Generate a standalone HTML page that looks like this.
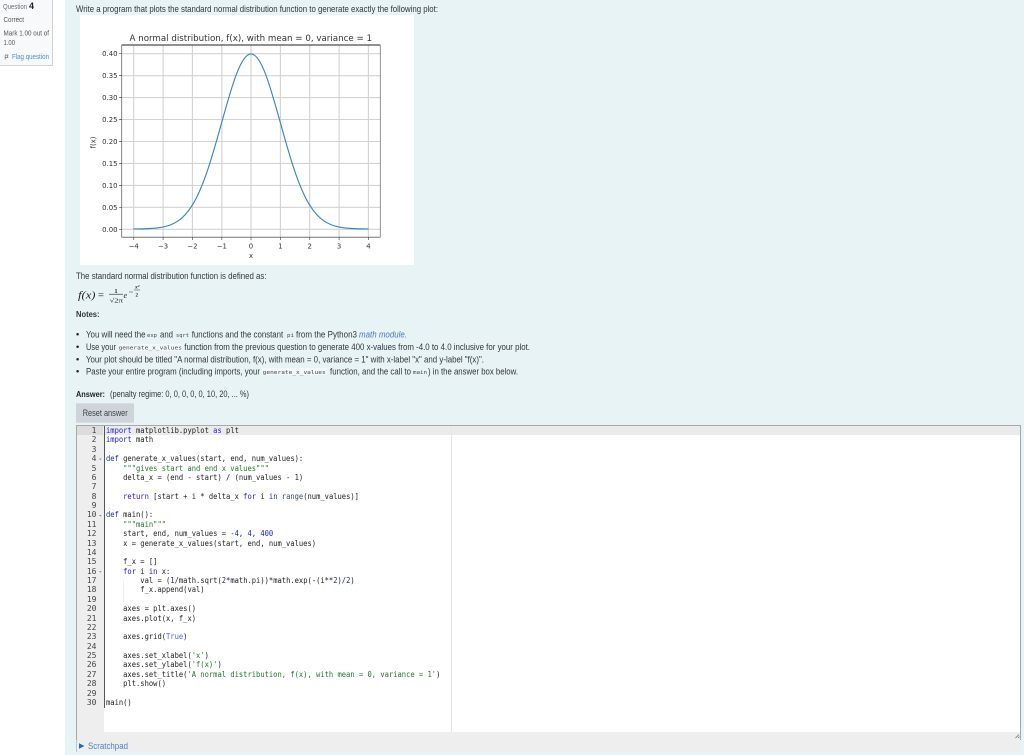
<!DOCTYPE html>
<html lang="en"><head><meta charset="utf-8"><title>Question 4</title>
<style>
html,body{margin:0;padding:0;background:#fff;width:1024px;height:755px;overflow:hidden}
#page{position:relative;width:1024px;height:755px;overflow:hidden;filter:blur(.35px)}
#page div,#page pre,#page svg{position:absolute}
#content{left:65px;top:0;width:959px;height:755px;background:#e7f3f5}
#panel{left:0;top:-1px;width:52px;height:65px;background:#f8f9fa;border:1px solid #d0d3d6;border-left:0}
#plot{left:80px;top:15px;width:333.5px;height:250px;background:#fff}
#editor{left:76px;top:425px;width:943px;height:314px;background:#fff;border:1.5px solid #a8a8a8;overflow:hidden}
#gutter{left:0;top:0;width:26.5px;height:100%;background:#eee}
#bottom{left:0;top:306px;width:100%;height:8px;background:#eee}
#activeline{left:26.5px;top:0;width:100%;height:9.4px;background:#ebebeb}
#activegut{left:0;top:0;width:26px;height:9.4px;background:#dcdcdc}
#gline{left:26.5px;top:0;width:1.2px;height:282px;background:#555}
#margin{left:373.5px;top:0;width:1px;height:306px;background:#e6e6e6}
#scratch{left:76px;top:740px;width:945px;height:12px;background:#eee;border-left:1.5px solid #c4c4c4;box-sizing:border-box}
#nums,#code{margin:0;top:426px;font:8px/9.38px "DejaVu Sans Mono","Liberation Mono",monospace;color:#333}
#nums{left:74px;width:22.5px;text-align:right;color:#444}
#code{left:106.3px;color:#222;transform:scaleX(.89);transform-origin:0 0}
.k{color:#1c1cd8}.s{color:#1f7a28}.n{color:#1a1acd}.f{color:#3c4c72}.c{color:#585cf6}
text{font-family:"Liberation Sans",sans-serif;fill:#33363a}
.d{font-family:"DejaVu Sans",sans-serif;fill:#333}
.m{font-family:"DejaVu Sans Mono",monospace;font-size:5.6px;fill:#444}
.q{font-family:"Liberation Serif",serif;fill:#222}
</style></head><body>
<div id="page">
<div id="content"></div>
<div id="panel"></div>
<div id="plot"></div>
<div id="editor">
  <div id="gutter"></div><div id="bottom"></div><div id="activeline"></div><div id="activegut"></div><div id="margin"></div><div id="gline"></div>
</div>
<div id="scratch"></div>
<svg width="1024" height="755" viewBox="0 0 1024 755" style="left:0;top:0">
<!-- side panel -->
<text x="3" y="9" font-size="7" textLength="24" lengthAdjust="spacingAndGlyphs" style="fill:#6a7076">Question</text>
<text x="29" y="9" font-size="9" font-weight="bold" style="fill:#222">4</text>
<text x="3.5" y="22" font-size="7" textLength="20.5" lengthAdjust="spacingAndGlyphs" style="fill:#555">Correct</text>
<text x="3.5" y="35.5" font-size="7" textLength="45.5" lengthAdjust="spacingAndGlyphs" style="fill:#555">Mark 1.00 out of</text>
<text x="3.5" y="45" font-size="7" textLength="11.5" lengthAdjust="spacingAndGlyphs" style="fill:#555">1.00</text>
<path d="M5 55h3l-.6 1.2.6 1.2H5.5M5.2 55v4.5" fill="none" stroke="#777" stroke-width=".7"/>
<text x="12" y="59" font-size="7" textLength="37" lengthAdjust="spacingAndGlyphs" style="fill:#4a8fd0">Flag question</text>
<!-- heading -->
<text x="76" y="12" font-size="8.9" textLength="362" lengthAdjust="spacingAndGlyphs">Write a program that plots the standard normal distribution function to generate exactly the following plot:</text>
<!-- chart grid -->
<g stroke="#d2d2d2" stroke-width="1.1" fill="none">
<path d="M133.7 45V237.3M163.1 45V237.3M192.4 45V237.3M221.8 45V237.3M251 45V237.3M280.4 45V237.3M309.7 45V237.3M339.1 45V237.3M368.4 45V237.3"/>
<path d="M121.7 53.7H380.3M121.7 75.65H380.3M121.7 97.6H380.3M121.7 119.5H380.3M121.7 141.5H380.3M121.7 163.4H380.3M121.7 185.4H380.3M121.7 207.3H380.3M121.7 229.3H380.3"/>
</g>
<g fill="none" stroke="#3b86bf" stroke-width="1.15">
<path id="curve" d="M251 53.96C255.9 53.96 260.8 61.66 265.7 74.53C270.6 87.4 275.5 105.15 280.4 122.84C285.3 140.53 290.2 157.96 295.1 172.17C300 186.38 304.9 197.41 309.8 205.31C314.7 213.21 319.6 218.11 324.5 221.31C329.4 224.51 334.3 226.09 339.2 227.06C344.1 228.03 349 228.4 353.9 228.62C358.8 228.84 363.7 228.9 368.6 228.94"/>
<path transform="translate(502,0) scale(-1,1)" d="M251 53.96C255.9 53.96 260.8 61.66 265.7 74.53C270.6 87.4 275.5 105.15 280.4 122.84C285.3 140.53 290.2 157.96 295.1 172.17C300 186.38 304.9 197.41 309.8 205.31C314.7 213.21 319.6 218.11 324.5 221.31C329.4 224.51 334.3 226.09 339.2 227.06C344.1 228.03 349 228.4 353.9 228.62C358.8 228.84 363.7 228.9 368.6 228.94"/>
</g>
<path d="M121.7 45H380.3" stroke="#222" stroke-width=".9"/>
<path d="M121.7 45V237.3" stroke="#666" stroke-width=".8"/>
<path d="M380.3 45V237.3" stroke="#777" stroke-width=".8"/>
<path d="M121.7 237.3H380.3" stroke="#777" stroke-width="1"/>
<g stroke="#444" stroke-width=".7">
<path d="M133.7 237.3v2.6M163.1 237.3v2.6M192.4 237.3v2.6M221.8 237.3v2.6M251 237.3v2.6M280.4 237.3v2.6M309.7 237.3v2.6M339.1 237.3v2.6M368.4 237.3v2.6"/>
<path d="M121.7 53.7h-2.6M121.7 75.65h-2.6M121.7 97.6h-2.6M121.7 119.5h-2.6M121.7 141.5h-2.6M121.7 163.4h-2.6M121.7 185.4h-2.6M121.7 207.3h-2.6M121.7 229.3h-2.6"/>
</g>
<text class="d" x="129.5" y="41" font-size="8.6" textLength="242.5" lengthAdjust="spacingAndGlyphs">A normal distribution, f(x), with mean = 0, variance = 1</text>
<g font-size="6.9" text-anchor="end">
<text class="d" x="117.5" y="56.2">0.40</text><text class="d" x="117.5" y="78.1">0.35</text><text class="d" x="117.5" y="100.1">0.30</text><text class="d" x="117.5" y="122">0.25</text><text class="d" x="117.5" y="144">0.20</text><text class="d" x="117.5" y="165.9">0.15</text><text class="d" x="117.5" y="187.9">0.10</text><text class="d" x="117.5" y="209.8">0.05</text><text class="d" x="117.5" y="231.8">0.00</text>
</g>
<g font-size="6.9" text-anchor="middle">
<text class="d" x="133.7" y="248.5">−4</text><text class="d" x="163.1" y="248.5">−3</text><text class="d" x="192.4" y="248.5">−2</text><text class="d" x="221.8" y="248.5">−1</text><text class="d" x="251" y="248.5">0</text><text class="d" x="280.4" y="248.5">1</text><text class="d" x="309.7" y="248.5">2</text><text class="d" x="339.1" y="248.5">3</text><text class="d" x="368.4" y="248.5">4</text>
<text class="d" x="251" y="258">x</text>
<text class="d" transform="translate(95.5,142.5) rotate(-90)">f(x)</text>
</g>
<!-- prose -->
<text x="76" y="279" font-size="8.9" textLength="190.5" lengthAdjust="spacingAndGlyphs">The standard normal distribution function is defined as:</text>
<!-- formula -->
<text class="q" x="78" y="298.5" font-size="10" font-style="italic" textLength="17.5" lengthAdjust="spacingAndGlyphs">f(x)</text>
<text class="q" x="98" y="298.5" font-size="10.5">=</text>
<text class="q" x="114.5" y="293" font-size="6" font-weight="bold">1</text>
<path d="M109 294.2H123" stroke="#222" stroke-width=".6"/>
<text class="q" x="109.5" y="302.5" font-size="6" textLength="13.5" lengthAdjust="spacingAndGlyphs">√2π</text>
<text class="q" x="123.5" y="298" font-size="8" font-style="italic">e</text>
<path d="M129 292H133M134 290H140" stroke="#333" stroke-width=".6"/>
<text class="q" x="135" y="288.5" font-size="5.5" font-style="italic" font-weight="bold">x²</text>
<text class="q" x="135.5" y="296.5" font-size="5" font-weight="bold">2</text>
<text x="76" y="317" font-size="8.6" font-weight="bold" textLength="23.5" lengthAdjust="spacingAndGlyphs">Notes:</text>
<circle cx="77.6" cy="334.3" r="1.25" fill="#222"/><circle cx="77.6" cy="346.8" r="1.25" fill="#222"/><circle cx="77.6" cy="359.3" r="1.25" fill="#222"/><circle cx="77.6" cy="371.2" r="1.25" fill="#222"/>
<!-- line 1 -->
<text x="86" y="337.5" font-size="8.8" textLength="59.5" lengthAdjust="spacingAndGlyphs">You will need the</text>
<text class="m" x="147" y="337" textLength="10" lengthAdjust="spacingAndGlyphs">exp</text>
<text x="160" y="337.5" font-size="8.8" textLength="13" lengthAdjust="spacingAndGlyphs">and</text>
<text class="m" x="176" y="337" textLength="13" lengthAdjust="spacingAndGlyphs">sqrt</text>
<text x="191.7" y="337.5" font-size="8.8" textLength="91.5" lengthAdjust="spacingAndGlyphs">functions and the constant</text>
<text class="m" x="287" y="337" textLength="7" lengthAdjust="spacingAndGlyphs">pi</text>
<text x="296" y="337.5" font-size="8.8" textLength="61" lengthAdjust="spacingAndGlyphs">from the Python3</text>
<text x="359" y="337.5" font-size="8.8" font-style="italic" textLength="48" lengthAdjust="spacingAndGlyphs" style="fill:#4a78b8">math module.</text>
<!-- line 2 -->
<text x="86" y="350" font-size="8.8" textLength="30" lengthAdjust="spacingAndGlyphs">Use your</text>
<rect x="118" y="344" width="64.5" height="7" fill="#f2f8f9"/>
<text class="m" x="118.5" y="349.7" textLength="63.5" lengthAdjust="spacingAndGlyphs">generate_x_values</text>
<text x="184.3" y="350" font-size="8.8" textLength="345.7" lengthAdjust="spacingAndGlyphs">function from the previous question to generate 400 x-values from -4.0 to 4.0 inclusive for your plot.</text>
<!-- line 3 -->
<text x="86" y="362.5" font-size="8.8" textLength="398" lengthAdjust="spacingAndGlyphs">Your plot should be titled "A normal distribution, f(x), with mean = 0, variance = 1" with x-label "x" and y-label "f(x)".</text>
<!-- line 4 -->
<text x="86" y="374.5" font-size="8.8" textLength="174" lengthAdjust="spacingAndGlyphs">Paste your entire program (including imports, your</text>
<rect x="262" y="368" width="65" height="7" fill="#f2f8f9"/>
<text class="m" x="262.7" y="374" textLength="63" lengthAdjust="spacingAndGlyphs">generate_x_values</text>
<text x="330" y="374.5" font-size="8.8" textLength="81" lengthAdjust="spacingAndGlyphs">function, and the call to</text>
<text class="m" x="413" y="374" textLength="14" lengthAdjust="spacingAndGlyphs">main</text>
<text x="428" y="374.5" font-size="8.8" textLength="90" lengthAdjust="spacingAndGlyphs">) in the answer box below.</text>
<!-- answer -->
<text x="76" y="397" font-size="8.6" font-weight="bold" textLength="29" lengthAdjust="spacingAndGlyphs" style="fill:#222">Answer:</text>
<text x="110" y="397" font-size="8.8" textLength="139" lengthAdjust="spacingAndGlyphs">(penalty regime: 0, 0, 0, 0, 0, 10, 20, ... %)</text>
<rect x="76" y="403.3" width="58" height="19.4" fill="#ced4da"/>
<text x="82.7" y="416" font-size="8.8" textLength="45" lengthAdjust="spacingAndGlyphs" style="fill:#3f4246">Reset answer</text>
<!-- fold arrows -->
<path d="M99 458.6h2.6l-1.3 1.6zM99 515h2.6l-1.3 1.6zM99 571.2h2.6l-1.3 1.6z" fill="#888"/>
<!-- indent guides -->
<path d="M123.5 580.5V602" stroke="#e4e4e4" stroke-width=".7"/>
<!-- resize handle -->
<path d="M1015.5 738L1019 734.5M1018 738L1019.5 736.5" stroke="#666" stroke-width=".7" fill="none"/>
<!-- scratchpad -->
<path d="M79 743.2L84.5 746L79 748.8Z" fill="#1d6fb5"/>
<text x="88" y="749" font-size="8.8" textLength="40" lengthAdjust="spacingAndGlyphs" style="fill:#4f84b8">Scratchpad</text>
</svg>
<pre id="nums">1
2
3
4
5
6
7
8
9
10
11
12
13
14
15
16
17
18
19
20
21
22
23
24
25
26
27
28
29
30</pre>
<pre id="code"><span class="k">import</span> matplotlib.pyplot <span class="k">as</span> plt
<span class="k">import</span> math

<span class="k">def</span> generate_x_values(start, end, num_values):
    <span class="s">"""gives start and end x values"""</span>
    delta_x = (end - start) / (num_values - 1)

    <span class="k">return</span> [start + i * delta_x <span class="k">for</span> i <span class="k">in</span> <span class="f">range</span>(num_values)]

<span class="k">def</span> main():
    <span class="s">"""main"""</span>
    start, end, num_values = <span class="n">-4</span>, <span class="n">4</span>, <span class="n">400</span>
    x = generate_x_values(start, end, num_values)

    f_x = []
    <span class="k">for</span> i <span class="k">in</span> x:
        val = (<span class="n">1</span>/math.sqrt(<span class="n">2</span>*math.pi))*math.exp(-(i**<span class="n">2</span>)/<span class="n">2</span>)
        f_x.append(val)

    axes = plt.axes()
    axes.plot(x, f_x)

    axes.grid(<span class="c">True</span>)

    axes.set_xlabel(<span class="s">'x'</span>)
    axes.set_ylabel(<span class="s">'f(x)'</span>)
    axes.set_title(<span class="s">'A normal distribution, f(x), with mean = 0, variance = 1'</span>)
    plt.show()

main()</pre>
</div>
</body></html>
